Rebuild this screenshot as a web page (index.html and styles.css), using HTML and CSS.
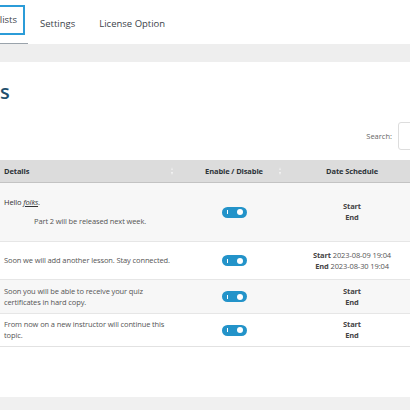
FILE: index.html
```html
<!DOCTYPE html>
<html>

<head>
    <meta charset="UTF-8">
    <title>Notifications</title>
    <link rel="stylesheet" href="styles.css">
</head>

<body>
    <nav class="tabBar">
        <a class="tab active" href="#"><span class="tabLabel">Notification lists</span></a>
        <a class="tab" href="#">Settings</a>
        <a class="tab" href="#">License Option</a>
    </nav>
    <div class="band"></div>
    <div class="panel">
        <h2 class="pageTitle"><span>Notifications</span></h2>
        <div class="searchRow">
            <label for="search">Search:</label>
            <input id="search" type="search">
        </div>
        <table class="noticeTable">
            <thead>
                <tr>
                    <th class="colDetails">Details<span class="sortIcon"></span></th>
                    <th class="colToggle">Enable / Disable<span class="sortIcon"></span></th>
                    <th class="colDate">Date Schedule<span class="sortIcon"></span></th>
                </tr>
            </thead>
            <tbody>
                <tr class="row1">
                    <td class="colDetails">
                        <p class="greeting">Hello <em>folks</em>.</p>
                        <p class="indent">Part 2 will be released next week.</p>
                    </td>
                    <td class="colToggle"><span class="toggle on"></span></td>
                    <td class="colDate"><b>Start</b><br><b>End</b></td>
                </tr>
                <tr class="row2">
                    <td class="colDetails">Soon we will add another lesson. Stay connected.</td>
                    <td class="colToggle"><span class="toggle on"></span></td>
                    <td class="colDate"><b>Start</b> 2023-08-09 19:04<br><b>End</b> 2023-08-30 19:04</td>
                </tr>
                <tr class="row3">
                    <td class="colDetails">Soon you will be able to receive your quiz certificates in hard copy.</td>
                    <td class="colToggle"><span class="toggle on"></span></td>
                    <td class="colDate"><b>Start</b><br><b>End</b></td>
                </tr>
                <tr class="row4">
                    <td class="colDetails">From now on a new instructor will continue this topic.</td>
                    <td class="colToggle"><span class="toggle on"></span></td>
                    <td class="colDate"><b>Start</b><br><b>End</b></td>
                </tr>
            </tbody>
        </table>
    </div>
    <div class="footBand"></div>
</body>

</html>
```

FILE: styles.css
```css
html {
    background: #ffffff;
    color: #555555;
    font-family: "Open Sans", Arial, sans-serif;
    font-size: 7.5px;
}
body {
    margin: 0;
    width: 410px;
    height: 410px;
    overflow: hidden;
    display: flex;
    flex-direction: column;
}
.tabBar {
    height: 44px;
    display: flex;
    align-items: stretch;
    background: #ffffff;
}
.tab {
    display: flex;
    align-items: center;
    padding: 0 12px;
    font-size: 9.5px;
    color: #3c434a;
    text-decoration: none;
    margin-top: 2px;
}
.tab.active {
    box-sizing: border-box;
    margin-left: -100px;
    width: 128px;
    padding: 0 3px 0 0;
    justify-content: flex-end;
    border-bottom: 1px solid #9aa3ab;
}
.tabLabel {
    box-sizing: border-box;
    height: 30px;
    display: flex;
    align-items: center;
    padding: 0 6px 0 8px;
    border: 2px solid #2b9cd8;
    margin-top: -6px;
    white-space: nowrap;
}
.band {
    height: 18px;
    background: #eeeeee;
}
.panel {
    flex: 1;
    background: #ffffff;
}
.pageTitle {
    margin: 18px 0 0 -114px;
    font-size: 20px;
    font-weight: 600;
    color: #1f4f6e;
    line-height: 24px;
}
.searchRow {
    display: flex;
    justify-content: flex-end;
    align-items: center;
    gap: 6px;
    margin: 18px -34px 0 0;
}
.searchRow label {
    color: #666666;
}
.searchRow input {
    width: 46px;
    height: 28px;
    box-sizing: border-box;
    border: 1px solid #dddddd;
    border-radius: 3px;
}
.noticeTable {
    width: 440px;
    margin-top: 10px;
    border-collapse: collapse;
    table-layout: fixed;
    border-bottom: 1px solid #e2e2e2;
    letter-spacing: -0.12px;
}
.noticeTable th {
    height: 22px;
    background: #dcdcdc;
    border-bottom: 1px solid #c3c3c3;
    color: #2c3338;
    font-weight: 700;
    position: relative;
    padding: 0 4px;
}
.noticeTable td {
    padding: 0 4px;
    line-height: 11px;
    border-top: 1px solid #e6e6e6;
    vertical-align: middle;
}
.noticeTable tbody tr:nth-child(odd) {
    background: #f7f7f7;
}
.noticeTable .row1 td {
    height: 58px;
}
.noticeTable .row2 td {
    height: 37px;
}
.noticeTable .row3 td {
    height: 33px;
}
.noticeTable .row4 td {
    height: 32px;
}
.colDetails {
    width: 172px;
    text-align: left;
}
.colToggle {
    width: 100px;
    text-align: center;
}
.noticeTable .colDate {
    width: 120px;
    text-align: center;
    padding-right: 28px;
}
.colDate b {
    color: #444444;
}
.greeting {
    margin: 0 0 8px;
    color: #333333;
}
.greeting em {
    text-decoration: underline;
}
.indent {
    margin: 0;
    padding-left: 30px;
}
.sortIcon {
    position: absolute;
    right: 6px;
    top: 7px;
    width: 3px;
    height: 8px;
}
.sortIcon:before,
.sortIcon:after {
    content: "";
    position: absolute;
    left: 0;
    border-left: 1.5px solid transparent;
    border-right: 1.5px solid transparent;
}
.sortIcon:before {
    top: 0;
    border-bottom: 3px solid #ececec;
}
.sortIcon:after {
    bottom: 0;
    border-top: 3px solid #f5f5f5;
}
.noticeTable th.colDate .sortIcon {
    right: 26px;
}
.toggle {
    display: inline-block;
    position: relative;
    width: 25px;
    height: 11px;
    border-radius: 6px;
    background: #2393c9;
    vertical-align: middle;
}
.toggle:before {
    content: "";
    position: absolute;
    left: 5px;
    top: 3.5px;
    width: 1.5px;
    height: 4px;
    background: #ffffff;
}
.toggle:after {
    content: "";
    position: absolute;
    right: 4px;
    top: 2.5px;
    width: 6px;
    height: 6px;
    border-radius: 50%;
    background: #ffffff;
}
.footBand {
    height: 13px;
    background: #f0f0f0;
}
```
